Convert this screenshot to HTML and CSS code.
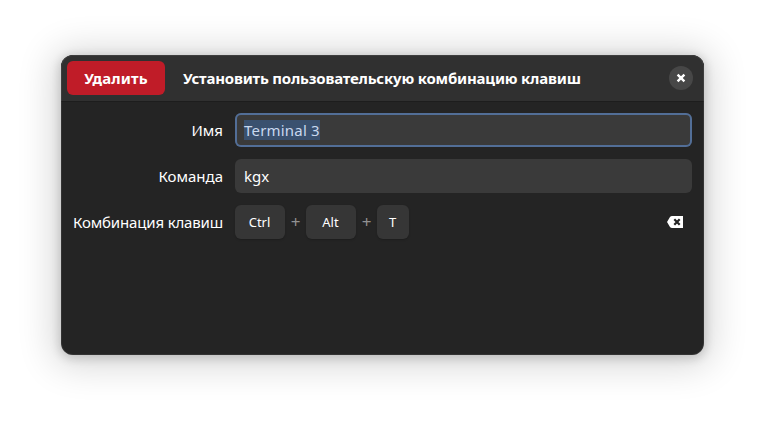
FILE: index.html
```html
<!DOCTYPE html>
<html lang="ru">
<head>
<meta charset="utf-8">
<title>Комбинация клавиш</title>
<link rel="stylesheet" href="styles.css">
</head>
<body>
<main class="dialog">
  <header class="header">
    <button class="delete">Удалить</button>
    <h1 class="title"><span>Установить пользовательскую комбинацию клавиш</span></h1>
    <button class="close" aria-label="Закрыть"><svg width="16" height="16" viewBox="0 0 16 16"><path d="M4.600 4.600l6.800 6.800M11.400 4.600l-6.800 6.800" stroke="#fff" stroke-width="2.400"/></svg></button>
  </header>
  <section class="form">
    <label class="label"><span>Имя</span></label>
    <div class="entry focused"><span class="selected">Terminal 3</span></div>
    <label class="label"><span>Команда</span></label>
    <div class="entry"><span>kgx</span></div>
    <label class="label long"><span>Комбинация клавиш</span></label>
    <div class="shortcut">
      <kbd class="key wide">Ctrl</kbd><span class="plus">+</span><kbd class="key wide">Alt</kbd><span class="plus">+</span><kbd class="key">T</kbd>
      <button class="clear" aria-label="Очистить"><svg width="16" height="16" viewBox="0 0 16 16"><path d="M5 2H16V14H5Q3.800 14 3 13L0 8L3 3Q3.800 2 5 2z" fill="#fff"/><path d="M7.300 5.300l5.400 5.400M12.700 5.300l-5.400 5.400" stroke="#242424" stroke-width="2.200"/></svg></button>
    </div>
  </section>
</main>
</body>
</html>
```
FILE: styles.css
```css
* { box-sizing: border-box; }
body {
  margin: 0;
  padding: 55px 61px 67px;
  height: 422px;
  overflow: hidden;
  background: #fff;
  color: #fff;
  font: 15px/20px "Noto Sans", sans-serif;
}
button { border: 0; padding: 0; font: inherit; color: inherit; background: none; }
.dialog {
  position: relative;
  width: 643px;
  height: 300px;
  border-radius: 12px;
  overflow: hidden;
  background: #242424;
  box-shadow: 0 2px 10px 2px rgba(0,0,0,.15), 0 3px 36px 8px rgba(0,0,0,.16);
}
.dialog::after {
  content: "";
  position: absolute;
  inset: 0;
  border-radius: inherit;
  box-shadow: inset 0 0 0 1px rgba(255,255,255,.07);
  pointer-events: none;
}
.header {
  display: flex;
  align-items: center;
  height: 46px;
  padding: 0 11px 0 6px;
  background: #303030;
  box-shadow: 0 1px #1d1d1d;
}
.delete { width: 98px; height: 34px; border-radius: 6px; background: #c01c28; font-weight: 700; letter-spacing: .15px; }
.title { flex: 1; margin: 0 0 0 18px; font-size: 15px; font-weight: 700; letter-spacing: -.2px; white-space: nowrap; }
.close { display: grid; place-items: center; width: 24px; height: 24px; border-radius: 50%; background: #474747; }
.form {
  display: grid;
  grid-template-columns: 150px 457px;
  grid-auto-rows: 34px;
  gap: 12px;
  padding: 12px;
}
.label { display: flex; align-items: center; justify-content: flex-end; white-space: nowrap; }
.long { letter-spacing: -.16px; }
.entry { display: flex; align-items: center; padding: 0 9px; border-radius: 6px; background: #3a3a3a; }
.focused { box-shadow: inset 0 0 0 2px #526e97; }
.selected { background: #3a516f; color: #c8d8ee; letter-spacing: .2px; }
.shortcut { display: flex; align-items: center; }
.key { display: grid; place-items: center; width: 32px; height: 34px; padding-right: 1px; border-radius: 6px; background: #363636; box-shadow: 0 1px 2px rgba(0,0,0,.2); font: 13px/20px "Noto Sans", sans-serif; }
.wide { width: 50px; }
.plus { width: 21px; text-align: center; color: #919191; font-size: 17px; }
.clear { display: grid; place-items: center; width: 34px; height: 34px; margin-left: auto; }
```
